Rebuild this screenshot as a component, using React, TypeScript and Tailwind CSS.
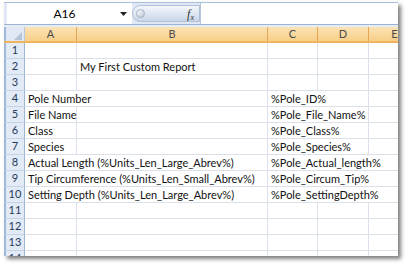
import React from 'react';

type Row = {
  n: number;
  a?: string;
  b?: string;
  c?: string;
  // gridlines hidden because text runs over into the next cell
  hideAB?: boolean;
  hideCD?: boolean;
  hideDE?: boolean;
};

const rows: Row[] = [
  { n: 1 },
  { n: 2, b: 'My First Custom Report' },
  { n: 3 },
  { n: 4, a: 'Pole Number', c: '%Pole_ID%', hideAB: true, hideCD: true },
  { n: 5, a: 'File Name', c: '%Pole_File_Name%', hideCD: true },
  { n: 6, a: 'Class', c: '%Pole_Class%', hideCD: true },
  { n: 7, a: 'Species', c: '%Pole_Species%', hideCD: true },
  { n: 8, a: 'Actual Length (%Units_Len_Large_Abrev%)', c: '%Pole_Actual_length%', hideAB: true, hideCD: true, hideDE: true },
  { n: 9, a: 'Tip Circumference (%Units_Len_Small_Abrev%)', c: '%Pole_Circum_Tip%', hideAB: true, hideCD: true, hideDE: true },
  { n: 10, a: 'Setting Depth (%Units_Len_Large_Abrev%)', c: '%Pole_SettingDepth%', hideAB: true, hideCD: true, hideDE: true },
  { n: 11 },
  { n: 12 },
  { n: 13 },
  { n: 14 },
];

const font = { fontFamily: 'Lato, "Liberation Sans", sans-serif' };

const FormulaBar: React.FC = () => (
  <div className="flex flex-col shrink-0">
    <div className="h-px bg-[#a9c1de]" />
    <div className="flex h-[21px] bg-[#dfe8f4]">
      <div className="w-[3px]" />
      <div className="flex items-center w-[125px] bg-white">
        <span className="flex-1 text-center text-[12px] text-black pl-[2px]">A16</span>
        <svg width="7" height="4" viewBox="0 0 7 4" className="mr-[5px]">
          <path d="M0 0 L7 0 L3.5 4 Z" fill="#222" />
        </svg>
      </div>
      <div className="flex items-center w-[68px] my-[2px] rounded-l-full bg-gradient-to-b from-[#f4f7fb] to-[#c9d6e8] border border-[#aebfd6]">
        <div className="w-[9px] h-[9px] ml-[3px] rounded-full bg-gradient-to-br from-[#ffffff] to-[#b9c6d6] border border-[#a4b3c6]" />
        <span
          className="ml-auto mr-[5px] text-[12px] italic text-[#333]"
          style={{ fontFamily: '"Liberation Serif", serif' }}
        >
          f<sub className="text-[8px]">x</sub>
        </span>
      </div>
      <div className="flex-1 bg-white border-l border-[#b5c5d9]" />
    </div>
    <div className="h-px bg-[#9cb3cf]" />
    <div className="h-[2px] bg-[#e4ecf6]" />
  </div>
);

const headerCell = 'flex items-center justify-center shrink-0 h-full border-r border-[#e6a552] text-[11px] text-[#4b4b4b]';

const ColumnHeader: React.FC = () => (
  <div className="flex h-[16px] shrink-0 border-b-2 border-[#f0b45c] bg-gradient-to-b from-[#fbe3b6] to-[#f7cf88]">
    <div className="relative w-[21px] shrink-0 h-full bg-[#dfe8f4] border-l-2 border-[#9fb9dd] border-r border-r-[#b7c8de]">
      <svg width="8" height="8" viewBox="0 0 8 8" className="absolute right-[2px] bottom-[1px]">
        <path d="M8 0 L8 8 L0 8 Z" fill="#b4c3d6" />
      </svg>
    </div>
    <div className={`${headerCell} w-[52px]`}>A</div>
    <div className={`${headerCell} w-[191px]`}>B</div>
    <div className={`${headerCell} w-[50px]`}>C</div>
    <div className={`${headerCell} w-[51px]`}>D</div>
    <div className={`${headerCell} w-[52px]`}>E</div>
  </div>
);

const cellText = 'whitespace-nowrap pl-[3px] text-[11px] text-[#111] leading-[15px]';

const SheetRow: React.FC<{ row: Row }> = ({ row }) => (
  <div className="flex h-[16px] shrink-0">
    <div className="flex items-center justify-center w-[21px] shrink-0 bg-[#e2eaf5] border-l-2 border-[#9fb9dd] border-r border-r-[#9fb6d3] border-b border-b-[#c5d3e6] text-[11px] text-[#1f3a60]">
      {row.n}
    </div>
    <div className={`w-[52px] shrink-0 border-b border-[#dbe0ea] ${row.hideAB ? '' : 'border-r'}`}>
      {row.a && <div className={cellText}>{row.a}</div>}
    </div>
    <div className="w-[191px] shrink-0 border-b border-r border-[#dbe0ea]">
      {row.b && <div className={cellText}>{row.b}</div>}
    </div>
    <div className={`w-[50px] shrink-0 border-b border-[#dbe0ea] ${row.hideCD ? '' : 'border-r'}`}>
      {row.c && <div className={cellText}>{row.c}</div>}
    </div>
    <div className={`w-[51px] shrink-0 border-b border-[#dbe0ea] ${row.hideDE ? '' : 'border-r'}`} />
    <div className="w-[52px] shrink-0 border-b border-r border-[#dbe0ea]" />
  </div>
);

export default function App() {
  return (
    <div className="w-[407px] h-[265px] bg-white pl-[4px] pt-[2px]" style={font}>
      <div className="flex flex-col w-[394px] h-[254px] overflow-hidden bg-white shadow-[3px_3px_4px_rgba(0,0,0,0.5)]">
        <FormulaBar />
        <ColumnHeader />
        {rows.map((r) => (
          <SheetRow key={r.n} row={r} />
        ))}
      </div>
    </div>
  );
}
